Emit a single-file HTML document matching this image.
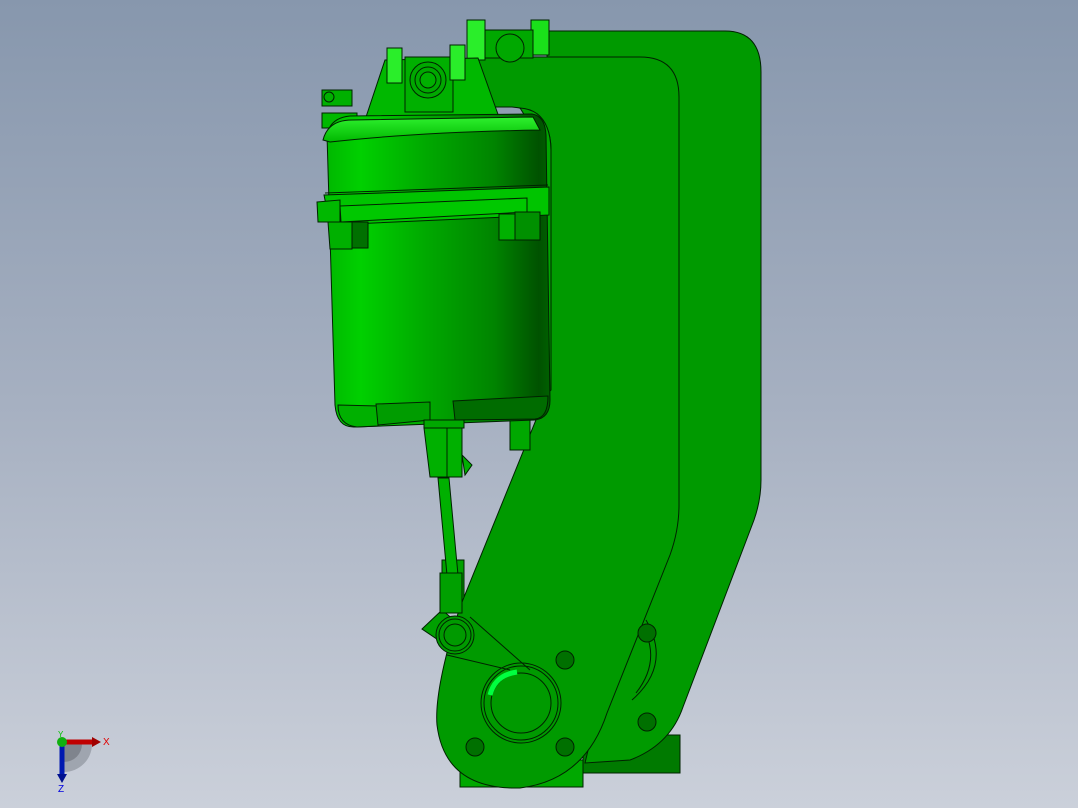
<!DOCTYPE html>
<html><head><style>
html,body{margin:0;padding:0;width:1078px;height:808px;overflow:hidden}
body{background:linear-gradient(#8797ad 0%,#a6b0c1 50%,#cbd0da 100%)}
svg{position:absolute;left:0;top:0}
text{font-family:"Liberation Sans",sans-serif}
</style></head><body>
<svg width="1078" height="808" viewBox="0 0 1078 808">
<defs>
<linearGradient id="mot" x1="0" x2="1" y1="0" y2="0">
<stop offset="0" stop-color="#00b800"/><stop offset="0.15" stop-color="#00d000"/>
<stop offset="0.45" stop-color="#00a800"/><stop offset="0.75" stop-color="#008400"/>
<stop offset="0.95" stop-color="#005200"/><stop offset="1" stop-color="#006000"/></linearGradient>
<linearGradient id="top" x1="0" x2="0" y1="0" y2="1">
<stop offset="0" stop-color="#2ef02e"/><stop offset="1" stop-color="#00b800"/></linearGradient>
</defs>
<g stroke="#002200" stroke-width="1">
<rect x="583" y="735" width="97" height="38" fill="#007a00"/>
<rect x="460" y="760" width="123" height="27" fill="#00a800"/>
<rect x="442" y="560" width="22" height="50" fill="#00a000"/>
<path d="M545,31 H725 Q761,31 761,72 V480 Q761,500 754,520 L683,707 Q670,745 630,760 L585,763 L600,700 Z" fill="#009a00"/>
<path d="M470,57 H640 Q679,57 679,97 V505 Q679,530 670,555 L607,713 Q585,780 520,788 Q445,790 437,725 Q434,690 460,607 L540,410 L551,380 V150 Q551,110 512,107 H470 Z" fill="#009a00"/>
<path d="M636,693 Q662,660 642,625" fill="none"/>
<path d="M632,700 Q672,665 646,620" fill="none"/>
<g fill="#007000"><circle cx="475" cy="747" r="9"/><circle cx="565" cy="660" r="9"/><circle cx="565" cy="747" r="9"/><circle cx="647" cy="633" r="9"/><circle cx="647" cy="722" r="9"/></g>
<circle cx="521" cy="703" r="40" fill="none"/><circle cx="521" cy="703" r="37" fill="none"/>
<circle cx="521" cy="703" r="30" fill="#009a00"/>
<path d="M490,695 Q495,675 517,672" stroke="#00ff40" stroke-width="5" fill="none"/>
<path d="M447,655 L510,670 M470,617 L530,670" fill="none"/>
<path d="M422,629 L442,610 L460,625 L450,648 Z" fill="#00a000"/>
<path d="M438,478 L449,478 L458,575 L447,575 Z" fill="#00b000"/>
<rect x="440" y="573" width="22" height="40" fill="#00a000"/>
<circle cx="455" cy="635" r="19" fill="#009a00"/><circle cx="455" cy="635" r="16" fill="none"/><circle cx="455" cy="635" r="11" fill="#009a00"/>
<path d="M424,428 H462 V477 H430 Z" fill="#00b000"/><path d="M447,428 V477" fill="none"/>
<path d="M462,455 L472,465 L465,475 Z" fill="#00b000"/>
<rect x="510" y="420" width="20" height="30" fill="#00a800"/>
<path d="M520,108 Q550,110 551,150 V390 L540,400 V140 Z" fill="#00a400"/>
<rect x="467" y="20" width="18" height="40" fill="#2aee2a"/><rect x="531" y="20" width="18" height="35" fill="#1ae01a"/>
<rect x="485" y="30" width="48" height="28" fill="#00a800"/><circle cx="510" cy="48" r="14" fill="#00a800"/>
<path d="M385,60 L478,58 L500,120 L365,120 Z" fill="#00b800"/>
<rect x="405" y="57" width="48" height="55" fill="#00b000"/>
<circle cx="428" cy="80" r="18" fill="#00a800"/><circle cx="428" cy="80" r="13" fill="none"/><circle cx="428" cy="80" r="8" fill="#00b000"/>
<rect x="387" y="48" width="15" height="35" fill="#2aee2a"/><rect x="450" y="45" width="15" height="35" fill="#2aee2a"/>
<rect x="322" y="90" width="30" height="16" fill="#00b000"/><circle cx="329" cy="97" r="5" fill="none"/>
<rect x="322" y="113" width="35" height="15" fill="#00b800"/>
<path d="M327,135 Q330,118 350,116 L532,114 Q545,116 546,135 L550,400 Q550,418 535,420 L355,427 Q337,428 335,405 Z" fill="url(#mot)"/>
<path d="M323,140 Q328,120 352,120 L533,117 L540,130 Q420,132 330,142 Z" fill="url(#top)"/>
<path d="M324,195 L549,187 V215 L330,225 Z" fill="#00c400"/>
<path d="M317,202 L340,200 V222 L318,222 Z" fill="#00b800"/>
<path d="M340,206 L527,198 L527,212 L341,222 Z" fill="#00c800"/>
<path d="M352,222 H368 V248 H352 Z" fill="#007000"/><path d="M328,222 H352 V249 H330 Z" fill="#00b000"/>
<path d="M499,214 H515 V240 H499 Z" fill="#00b000"/><path d="M515,212 H540 V240 H515 Z" fill="#009000"/>
<path d="M325,193 L548,185" fill="none"/>
<path d="M338,405 Q338,425 357,427 L378,426 V406 Z" fill="#00b000"/>
<path d="M376,404 L430,402 V420 L378,425 Z" fill="#009c00"/>
<path d="M453,401 L548,396 Q548,418 535,419 L455,420 Z" fill="#006c00"/>
<path d="M424,420 H464 V428 H424 Z" fill="#00a800"/>
</g>
<path d="M64,744 H92 A28,28 0 0 1 64,772 Z" fill="#8e949e" opacity="0.7"/>
<path d="M64,744 H82 A18,18 0 0 1 64,762 Z" fill="#6a6e76" opacity="0.6"/>
<path d="M64,742 H92" stroke="#c00000" stroke-width="5"/><path d="M92,737 L101,742 L92,747 Z" fill="#a00000"/>
<path d="M62,744 V774" stroke="#0018b0" stroke-width="5"/><path d="M57,774 L62,783 L67,774 Z" fill="#001090"/>
<circle cx="62" cy="742" r="5" fill="#10b010"/>
<text x="103" y="745" font-size="10" fill="#e00000">X</text>
<text x="58" y="792" font-size="10" fill="#0000e0">Z</text>
<text x="58" y="737" font-size="8" fill="#00c000">Y</text>
</svg>
</body></html>
